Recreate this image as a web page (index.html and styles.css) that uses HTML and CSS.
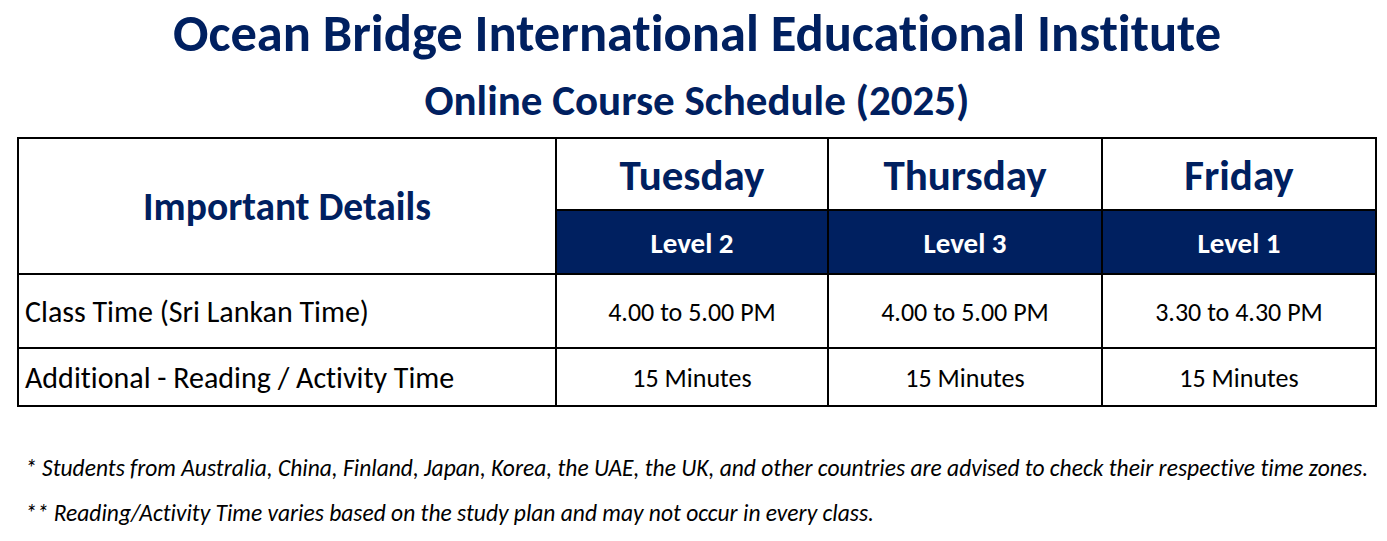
FILE: index.html
```html
<!DOCTYPE html>
<html lang="en">
<head>
<meta charset="utf-8">
<title>Online Course Schedule (2025)</title>
<link rel="stylesheet" href="styles.css">
</head>
<body>
<main class="page">
  <header class="heading">
    <h1 class="title">Ocean Bridge International Educational Institute</h1>
    <h2 class="subtitle">Online Course Schedule (2025)</h2>
  </header>
  <section class="schedule">
    <div class="cell details-head">Important Details</div>
    <div class="cell day">Tuesday</div>
    <div class="cell day">Thursday</div>
    <div class="cell day">Friday</div>
    <div class="cell level">Level 2</div>
    <div class="cell level">Level 3</div>
    <div class="cell level">Level 1</div>
    <div class="cell label row-a">Class Time (Sri Lankan Time)</div>
    <div class="cell value row-a">4.00 to 5.00 PM</div>
    <div class="cell value row-a">4.00 to 5.00 PM</div>
    <div class="cell value row-a">3.30 to 4.30 PM</div>
    <div class="cell label row-b">Additional - Reading / Activity Time</div>
    <div class="cell value row-b">15 Minutes</div>
    <div class="cell value row-b">15 Minutes</div>
    <div class="cell value row-b">15 Minutes</div>
  </section>
  <footer class="notes">
    <p class="note">* Students from Australia, China, Finland, Japan, Korea, the UAE, the UK, and other countries are advised to check their respective time zones.</p>
    <p class="note">** Reading/Activity Time varies based on the study plan and may not occur in every class.</p>
  </footer>
</main>
</body>
</html>
```
FILE: styles.css
```css
* { box-sizing: border-box; }
html, body { margin: 0; padding: 0; background: #ffffff; }
body {
  font-family: Carlito, Lato, "Open Sans", sans-serif;
  font-variant-ligatures: none;
  color: #000000;
}
.page {
  width: 1360px;
  margin-left: 17px;
}
.heading {
  text-align: center;
  color: #002060;
}
.title {
  margin: 0;
  font-size: 52.5px;
  font-weight: 700;
  line-height: 66px;
}
.subtitle {
  margin: 0;
  font-size: 43px;
  font-weight: 700;
  line-height: 70px;
}
.schedule {
  margin-top: 1px;
  display: grid;
  grid-template-columns: 536px 270px 272px 272px;
  grid-template-rows: 70px 62px 72px 56px;
  gap: 2px;
  padding: 2px;
  background: #000000;
}
.cell {
  background: #ffffff;
  display: flex;
  align-items: center;
  justify-content: center;
  white-space: nowrap;
}
.details-head {
  grid-row: 1 / span 2;
  color: #002060;
  font-weight: 700;
  font-size: 39.5px;
}
.day {
  color: #002060;
  font-weight: 700;
  font-size: 43px;
  padding-top: 3px;
}
.level {
  background: #002060;
  color: #ffffff;
  font-weight: 700;
  font-size: 29px;
  padding-top: 2px;
}
.label {
  justify-content: flex-start;
  padding-left: 6px;
  font-size: 30px;
}
.value {
  font-size: 26px;
  padding-top: 2px;
}
.notes {
  padding-left: 8px;
  margin-top: 47px;
}
.note {
  margin: 0 0 17px;
  font-style: italic;
  font-size: 23.5px;
  line-height: 28px;
  white-space: nowrap;
}
```
